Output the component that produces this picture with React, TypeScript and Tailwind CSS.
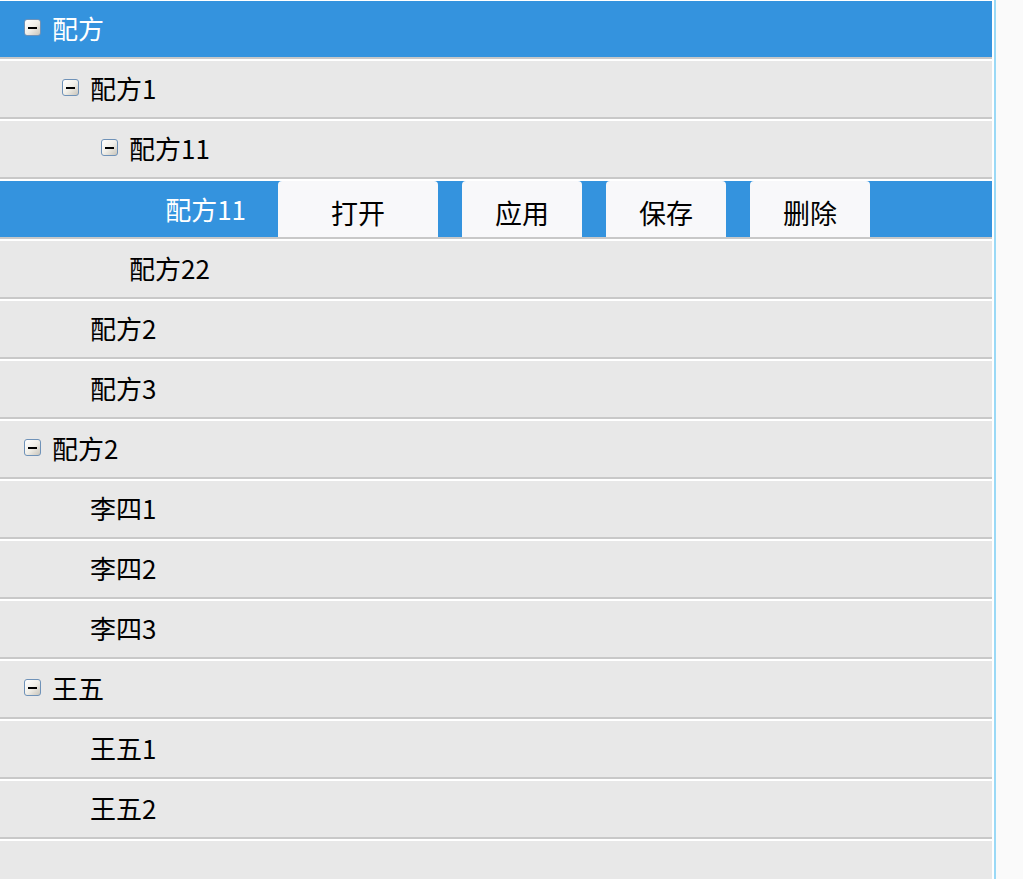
import React from "react";

type Node = {
  label: string;
  level: number;
  expandable?: boolean;
  selected?: boolean;
  actions?: boolean;
};

const rows: Node[] = [
  { label: "配方", level: 0, expandable: true, selected: true },
  { label: "配方1", level: 1, expandable: true },
  { label: "配方11", level: 2, expandable: true },
  { label: "配方11", level: 3, selected: true, actions: true },
  { label: "配方22", level: 2 },
  { label: "配方2", level: 1 },
  { label: "配方3", level: 1 },
  { label: "配方2", level: 0, expandable: true },
  { label: "李四1", level: 1 },
  { label: "李四2", level: 1 },
  { label: "李四3", level: 1 },
  { label: "王五", level: 0, expandable: true },
  { label: "王五1", level: 1 },
  { label: "王五2", level: 1 },
];

const indent = ["pl-[24px]", "pl-[62px]", "pl-[101px]"];
const leafIndent = ["pl-[52px]", "pl-[90px]", "pl-[129px]"];

function MinusBox() {
  return (
    <span className="mr-[11px] flex h-[17px] w-[17px] shrink-0 items-center justify-center rounded-[3px] border border-[#6f92b8] bg-[linear-gradient(135deg,#ffffff_0%,#f1efe9_50%,#c9c5bb_100%)]">
      <span className="h-[2px] w-[9px] bg-black" />
    </span>
  );
}

const buttons = [
  { text: "打开", w: "w-[160px]" },
  { text: "应用", w: "w-[120px]" },
  { text: "保存", w: "w-[120px]" },
  { text: "删除", w: "w-[120px]" },
];

function Row({ node }: { node: Node }) {
  const bg = node.selected ? "bg-[#3493de] text-white" : "bg-[#e8e8e8] text-black";
  let content: React.ReactNode;

  if (node.actions) {
    content = (
      <div className="flex h-full items-stretch">
        <div className="flex w-[278px] items-center justify-end pb-[2px] pr-[32px]">{node.label}</div>
        <div className="flex gap-[24px]">
          {buttons.map((b) => (
            <div
              key={b.text}
              className={`${b.w} flex items-center justify-center rounded-t-[4px] bg-[#f8f8fa] pt-[9px] text-[27px] text-black`}
            >
              {b.text}
            </div>
          ))}
        </div>
      </div>
    );
  } else if (node.expandable) {
    content = (
      <div className={`flex h-full items-center pb-[3px] ${indent[node.level]}`}>
        <MinusBox />
        <span>{node.label}</span>
      </div>
    );
  } else {
    content = (
      <div className={`flex h-full items-center pb-[3px] ${leafIndent[node.level]}`}>
        <span>{node.label}</span>
      </div>
    );
  }

  return (
    <div className="h-[60px] border-b-2 border-white">
      <div className={`h-full border-b-2 border-[#c8c8c8] ${bg}`}>{content}</div>
    </div>
  );
}

export default function App() {
  return (
    <div
      className="flex h-[879px] w-[1023px] overflow-hidden bg-[#fafafa] text-[26px]"
      style={{ fontFamily: '"Noto Sans CJK SC", "Noto Sans", sans-serif' }}
    >
      <div className="h-full w-[992px] border-t border-white bg-[#e8e8e8]">
        {rows.map((node, i) => (
          <Row key={i} node={node} />
        ))}
      </div>
      <div className="w-[2px] bg-white" />
      <div className="w-[2px] bg-[#9ad9f6]" />
      <div className="flex-1 bg-[#fafafa]" />
    </div>
  );
}
